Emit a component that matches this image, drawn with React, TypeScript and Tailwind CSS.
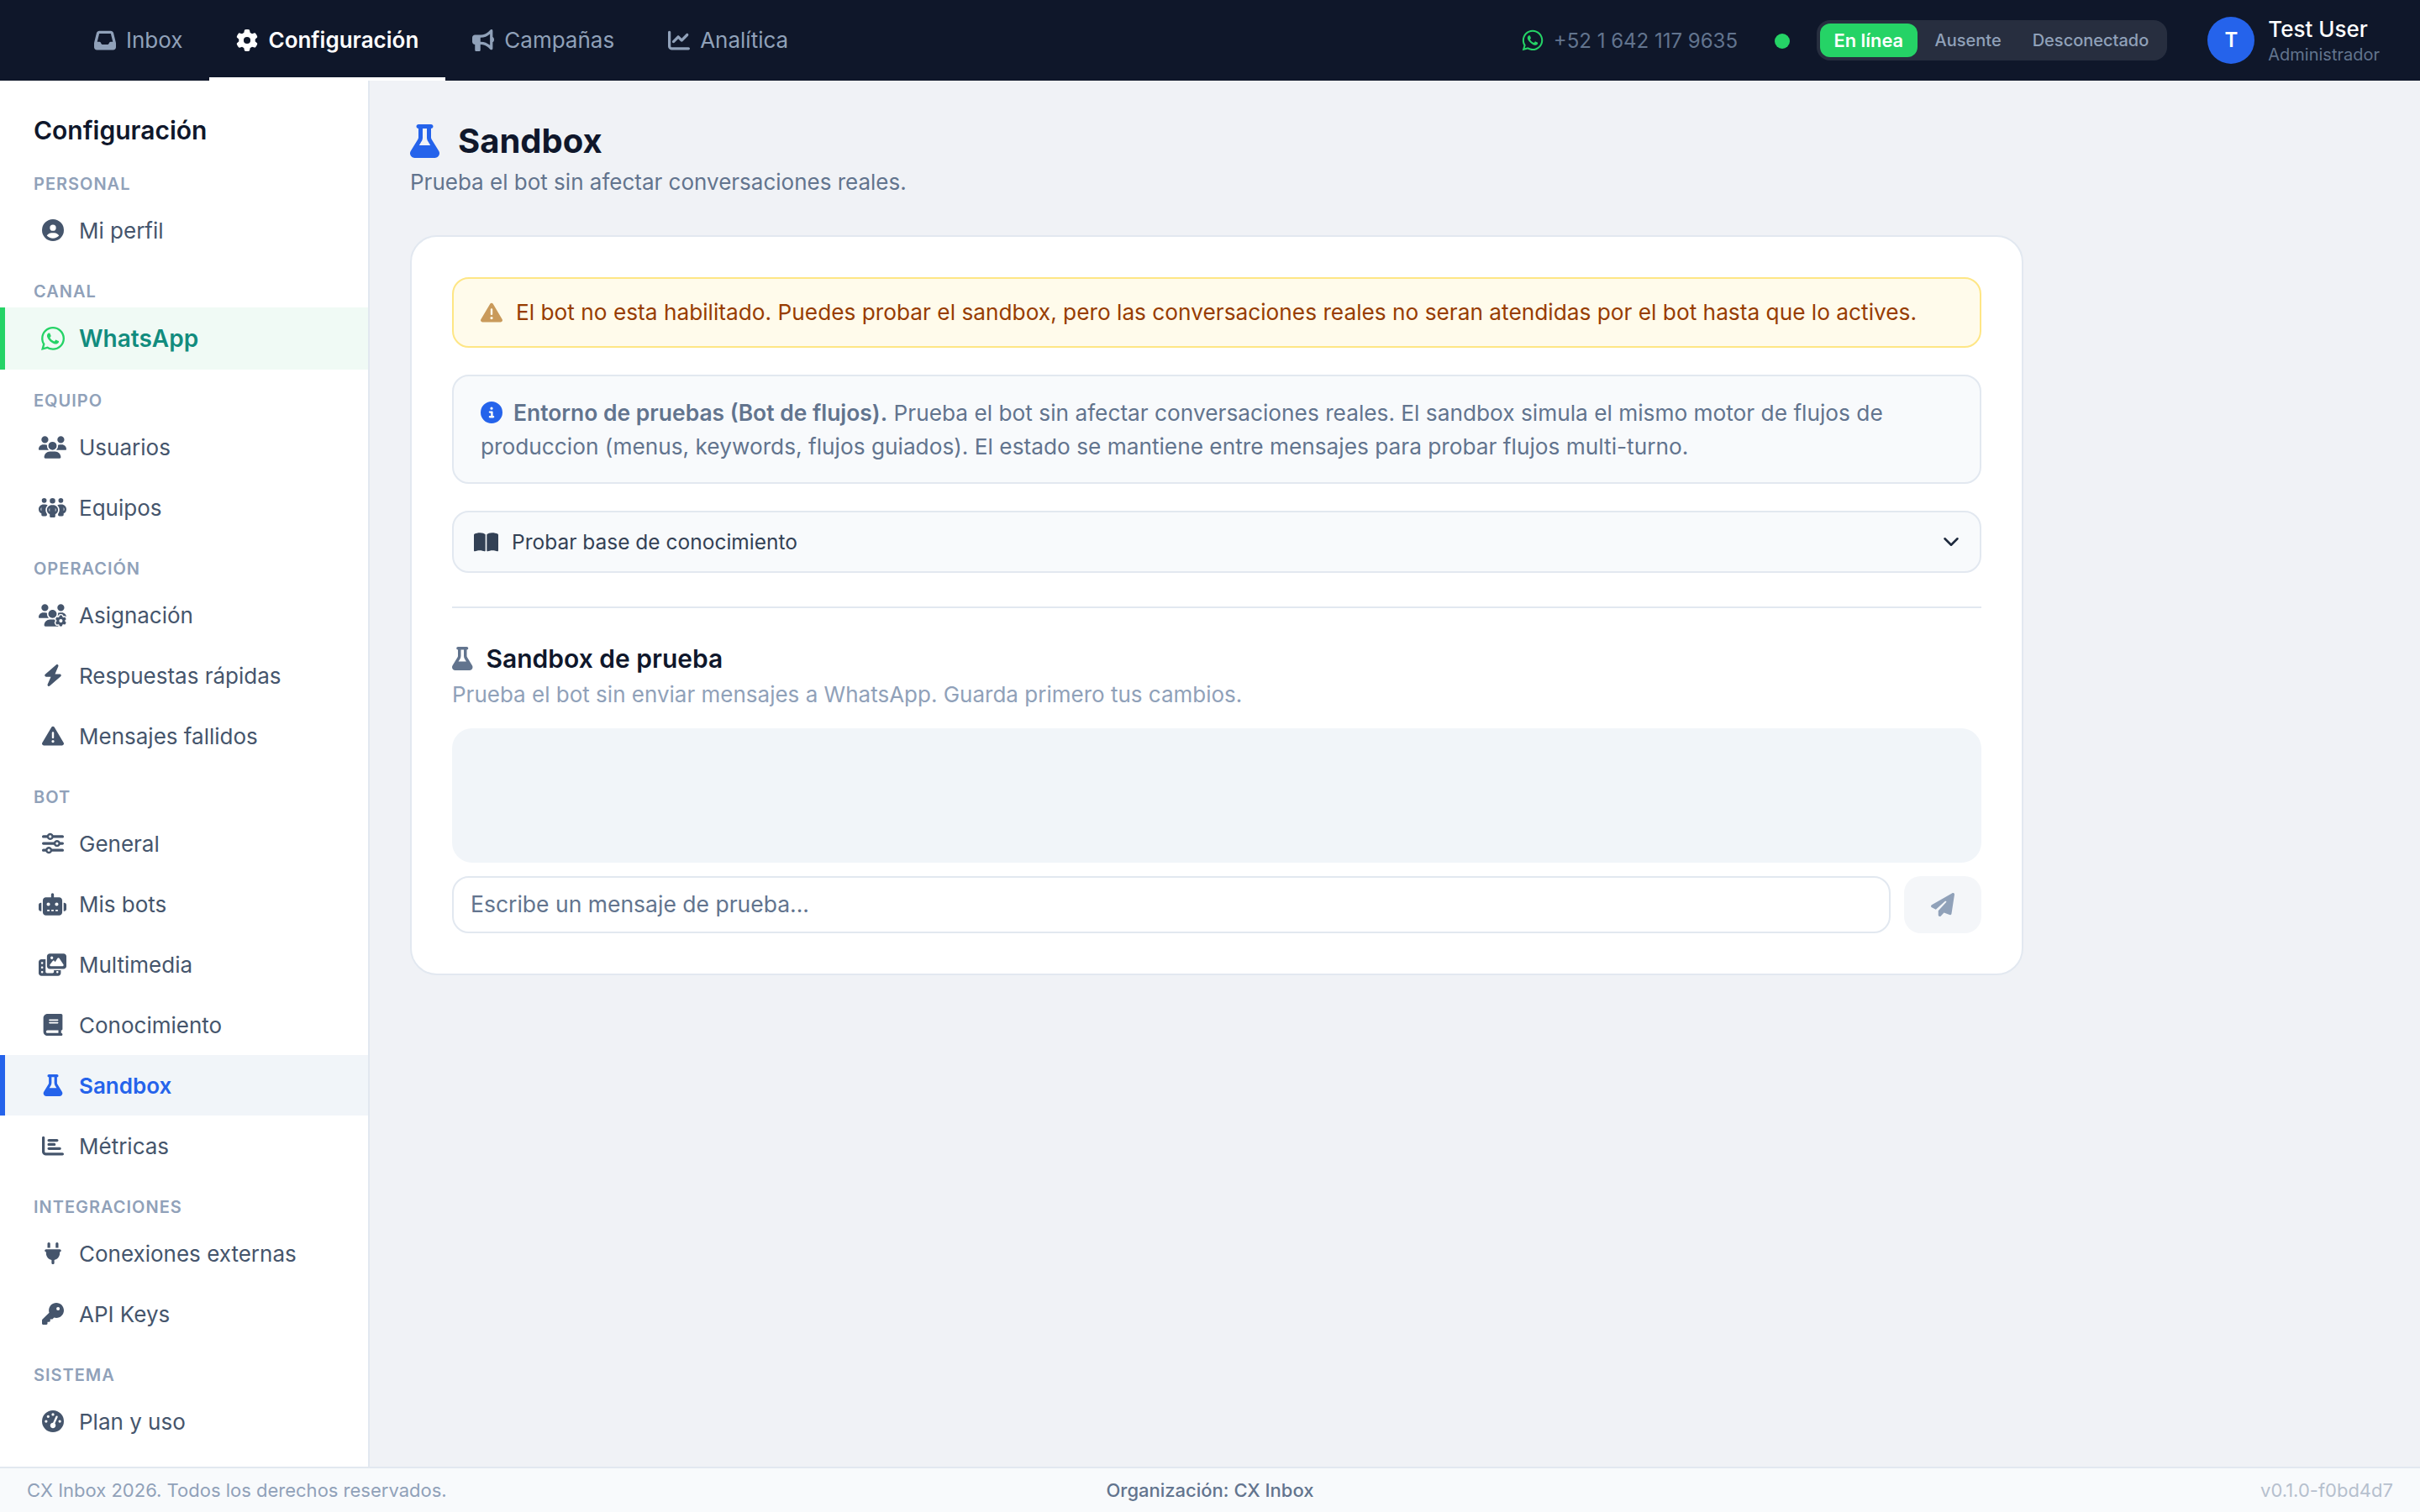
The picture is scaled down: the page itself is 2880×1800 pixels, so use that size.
import React from "react";
import {
  FaInbox, FaGear, FaBullhorn, FaChartLine, FaWhatsapp, FaCircleUser, FaUsers, FaPeopleGroup, FaUsersGear,
  FaBolt, FaTriangleExclamation, FaSliders, FaRobot, FaPhotoFilm, FaBook, FaFlask, FaChartBar, FaPlug, FaKey,
  FaGaugeHigh, FaBookOpen, FaPaperPlane, FaCircleInfo,
} from "react-icons/fa6";
import { ChevronDown } from "lucide-react";

type Ic = React.ComponentType<{ className?: string; size?: number }>;

function Tab({ icon: Icon, label, active }: { icon: Ic; label: string; active?: boolean }) {
  return (
    <div
      className={
        active
          ? "flex h-full items-center gap-3 border-y-4 border-b-white border-t-transparent px-8 font-semibold text-white"
          : "flex h-full items-center gap-3 border-y-4 border-transparent px-8 font-normal text-slate-400"
      }
    >
      <Icon size={26} />
      <span className="text-[26px] leading-[40px]">{label}</span>
    </div>
  );
}

function Label({ children }: { children: string }) {
  return (
    <div className="px-10 pb-[3px] pt-[21px] text-[20px] font-semibold uppercase leading-[32px] tracking-[1px] text-slate-400">
      {children}
    </div>
  );
}

function Item({ icon: Icon, label, size = 26 }: { icon: Ic; label: string; size?: number }) {
  return (
    <div className="flex h-[72px] items-center gap-[15px] border-l-[6px] border-transparent pl-10 text-[26px] text-slate-600">
      <span className="flex w-[33px] justify-center"><Icon size={size} /></span>
      <span>{label}</span>
    </div>
  );
}

export default function App() {
  return (
    <div className="flex h-screen w-full flex-col overflow-hidden bg-[#f0f2f6] font-['Inter',sans-serif]">
      <header className="flex h-24 shrink-0 items-center justify-between bg-[#0f172a] pl-20 pr-12">
        <nav className="flex h-full">
          <Tab icon={FaInbox} label="Inbox" />
          <Tab icon={FaGear} label="Configuración" active />
          <Tab icon={FaBullhorn} label="Campañas" />
          <Tab icon={FaChartLine} label="Analítica" />
        </nav>
        <div className="flex items-center">
          <FaWhatsapp size={28} className="text-[#25d366]" />
          <span className="ml-[11px] mt-[2px] text-[24px] text-slate-500">+52 1 642 117 9635</span>
          <span className="ml-11 mt-[2px] h-[18px] w-[18px] rounded-full bg-[#25d366]" />
          <div className="ml-8 flex h-12 items-center gap-[5px] rounded-2xl bg-white/10 py-1 pl-1 pr-[6px] text-[20px] font-medium text-slate-400">
            <span className="flex h-10 items-center rounded-xl bg-[#25d366] px-[16.5px] text-[21.85px] font-semibold text-white">En línea</span>
            <span className="px-4">Ausente</span>
            <span className="px-4">Desconectado</span>
          </div>
          <div className="ml-12 flex h-14 w-14 items-center justify-center rounded-full bg-[#2563eb] text-[24px] font-semibold text-white">T</div>
          <div className="ml-4 flex flex-col">
            <span className="mt-[2px] text-[26px] font-medium leading-[32px] text-white">Test User</span>
            <span className="text-[20px] leading-[28px] text-slate-500">Administrador</span>
          </div>
        </div>
      </header>

      <div className="flex min-h-0 flex-1">
        <aside className="w-[440px] shrink-0 overflow-hidden border-r-2 border-slate-200 bg-white">
          <div className="px-10 pb-2 pt-10 text-[30px] font-semibold leading-[38px] text-slate-900">Configuración</div>
          <Label>Personal</Label>
          <Item icon={FaCircleUser} label="Mi perfil" />
          <Label>Canal</Label>
          <div className="flex h-[74px] items-center gap-[15px] border-l-[6px] border-[#25d366] bg-[#f0faf5] pl-10 text-[28px] font-semibold text-[#128c7e]">
            <span className="flex w-[33px] justify-center"><FaWhatsapp size={32} className="text-[#25d366]" /></span>
            <span>WhatsApp</span>
          </div>
          <Label>Equipo</Label>
          <Item icon={FaUsers} size={33} label="Usuarios" />
          <Item icon={FaPeopleGroup} size={33} label="Equipos" />
          <Label>Operación</Label>
          <Item icon={FaUsersGear} size={33} label="Asignación" />
          <Item icon={FaBolt} label="Respuestas rápidas" />
          <Item icon={FaTriangleExclamation} label="Mensajes fallidos" />
          <Label>Bot</Label>
          <Item icon={FaSliders} label="General" />
          <Item icon={FaRobot} size={33} label="Mis bots" />
          <Item icon={FaPhotoFilm} size={33} label="Multimedia" />
          <Item icon={FaBook} label="Conocimiento" />
          <div className="flex h-[72px] items-center gap-[15px] border-l-[6px] border-[#2563eb] bg-slate-100 pl-10 text-[26px] font-semibold text-[#2563eb]">
            <span className="flex w-[33px] justify-center"><FaFlask size={26} /></span>
            <span>Sandbox</span>
          </div>
          <Item icon={FaChartBar} label="Métricas" />
          <Label>Integraciones</Label>
          <Item icon={FaPlug} label="Conexiones externas" />
          <Item icon={FaKey} label="API Keys" />
          <Label>Sistema</Label>
          <Item icon={FaGaugeHigh} label="Plan y uso" />
        </aside>

        <main className="min-w-0 flex-1 px-12 pt-12">
          <div className="flex h-[48px] items-center gap-[22px]">
            <FaFlask className="h-10 w-[35px] text-[#2563eb]" />
            <h1 className="text-[40px] font-bold leading-[48px] text-slate-900">Sandbox</h1>
          </div>
          <p className="mt-[2px] text-[26px] leading-[46px] text-slate-500">Prueba el bot sin afectar conversaciones reales.</p>

          <section className="mt-[40px] w-[1920px] rounded-[32px] border-2 border-slate-200 bg-white p-12">
            <div className="flex h-[84px] items-center gap-4 rounded-[20px] border-2 border-amber-200 bg-amber-50 px-8 text-[26.25px] text-amber-800">
              <FaTriangleExclamation size={26} className="text-[#c99a5b]" />
              <span>El bot no esta habilitado. Puedes probar el sandbox, pero las conversaciones reales no seran atendidas por el bot hasta que lo actives.</span>
            </div>

            <div className="mt-8 h-[130px] rounded-[20px] border-2 border-slate-200 bg-slate-50 px-8 py-[23px] text-[26.25px] leading-[40px] text-slate-500">
              <FaCircleInfo size={26} className="mr-[13px] inline-block align-[-3px] text-[#2563eb]" />
              <strong className="text-[26.45px] font-semibold">Entorno de pruebas (Bot de flujos).</strong> Prueba el bot sin afectar conversaciones reales. El sandbox simula el mismo motor de flujos de produccion (menus, keywords, flujos guiados). El estado se mantiene entre mensajes para probar flujos multi-turno.
            </div>

            <div className="mt-8 flex h-[74px] items-center justify-between rounded-[20px] border-2 border-slate-200 bg-slate-50 px-6 text-[#334155]">
              <div className="flex items-center gap-4">
                <FaBookOpen size={29} />
                <span className="text-[24.5px] font-normal">Probar base de conocimiento</span>
              </div>
              <ChevronDown size={30} className="-mr-[5px] text-slate-800" />
            </div>

            <div className="mt-10 border-t-2 border-slate-200" />

            <div className="mt-[40px] flex h-10 items-center gap-4">
              <FaFlask className="h-7 w-[24.5px] text-slate-500" />
              <h2 className="text-[30px] font-semibold text-slate-900">Sandbox de prueba</h2>
            </div>
            <p className="mt-[1px] text-[26px] leading-[44px] text-slate-400">Prueba el bot sin enviar mensajes a WhatsApp. Guarda primero tus cambios.</p>

            <div className="mt-[18px] h-40 rounded-3xl bg-slate-100" />

            <div className="mt-4 flex gap-4">
              <div className="flex h-[68px] flex-1 items-center rounded-[20px] border-2 border-slate-200 bg-white px-5 text-[26.5px] text-slate-500">
                Escribe un mensaje de prueba...
              </div>
              <div className="flex h-[68px] w-[92px] items-center justify-center rounded-[20px] bg-[#f4f6f9] text-slate-400">
                <FaPaperPlane size={28} />
              </div>
            </div>
          </section>
        </main>
      </div>

      <footer className="grid h-[54px] shrink-0 grid-cols-3 items-center border-t-2 border-slate-200 bg-slate-50 px-8 text-[22px]">
        <span className="text-slate-400">CX Inbox 2026. Todos los derechos reservados.</span>
        <span className="text-center font-medium text-slate-500">Organización: CX Inbox</span>
        <span className="text-right text-[#b6c0ce]">v0.1.0-f0bd4d7</span>
      </footer>
    </div>
  );
}
